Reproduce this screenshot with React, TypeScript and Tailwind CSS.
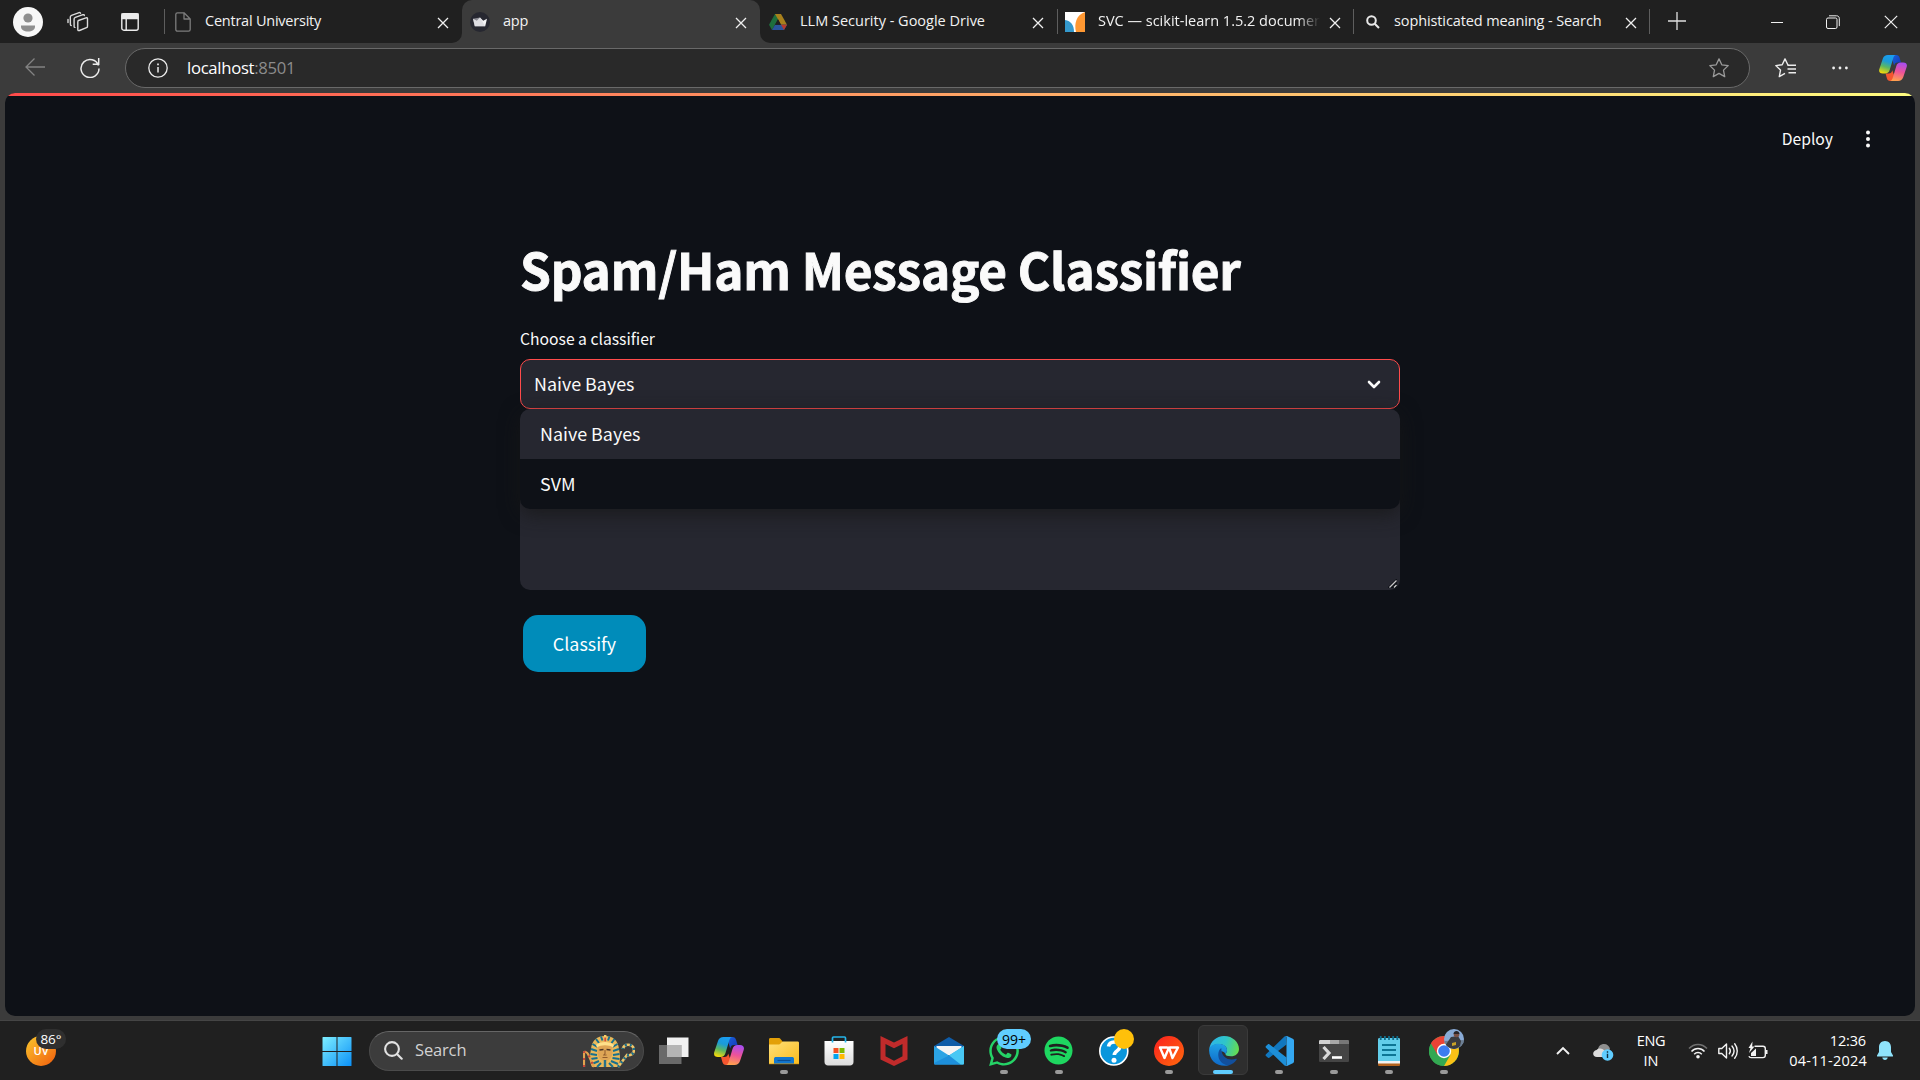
import React from "react";
import { FaWhatsapp, FaSpotify } from "react-icons/fa";

const Close = ({ className = "" }: { className?: string }) => (
  <svg viewBox="0 0 12 12" className={`h-3 w-3 shrink-0 ${className}`} fill="none" stroke="#f0f0f0" strokeWidth="1.3">
    <path d="M1 1l10 10M11 1L1 11" />
  </svg>
);

const Copilot = ({ id, className }: { id: string; className: string }) => (
  <svg viewBox="0 0 30 28" className={className}>
    <defs>
      <linearGradient id={`${id}a`} x1=".6" y1="0" x2=".3" y2="1">
        <stop offset="0" stopColor="#1a9df0" />
        <stop offset=".35" stopColor="#1b9bd8" />
        <stop offset=".65" stopColor="#5cb860" />
        <stop offset="1" stopColor="#f5d90a" />
      </linearGradient>
      <linearGradient id={`${id}b`} x1=".6" y1="0" x2=".4" y2="1">
        <stop offset="0" stopColor="#a84df0" />
        <stop offset=".5" stopColor="#ee5398" />
        <stop offset="1" stopColor="#ffa14e" />
      </linearGradient>
      <linearGradient id={`${id}c`} x1="0" y1="0" x2="1" y2="1">
        <stop offset="0" stopColor="#1b5fd8" />
        <stop offset="1" stopColor="#1238b8" />
      </linearGradient>
    </defs>
    <path d="M14 0h4.500c2 0 3 1 3.600 3l1.500 5h-3.400c-2.600 0-3.200 1-4 3.500L14 4z" fill={`url(#${id}c)`} />
    <path d="M16 28h-4c-2 0-3-1-3.600-3L7 20h3.200c2.600 0 3.400-1 4-3.500L17 24z" fill="#f4562f" />
    <path d="M9.500 0H18c-1.800.4-2.300 2-3 4.200L11.500 16c-.8 2.800-2.300 4-5 4H4C.8 20-.6 18 .3 15L4 4C4.900 1.400 6.700 0 9.500 0z" fill={`url(#${id}a)`} />
    <path d="M20.500 28H12c1.800-.4 2.300-2 3-4.200L18.500 12c.8-2.800 2.300-4 5-4H26c3.200 0 4.600 2 3.700 5L26 24c-.9 2.600-2.700 4-5.500 4z" fill={`url(#${id}b)`} />
  </svg>
);

const Pharaoh = () => (
  <svg viewBox="0 0 52 34" className="h-[34px] w-[52px]">
    <path d="M9 33C6 27 7 21 8 15 9 6 14 2 22 2s13 4 14 13c1 6 2 12-1 18z" fill="#e9b95a" />
    <g stroke="#17708f" strokeWidth="2" fill="none">
      <path d="M13 5l3 4M18 2.500l1.500 4M26.500 2.500L25 6.500M31.500 5l-3 4M9.500 10l5 3M34.500 10l-5 3M8 15l6 2M36 15l-6 2M7.500 20l6.500 1M36.500 20L30 21M7.500 25l7-1M36.500 25l-7-1M9 30l7-3M35 30l-7-3M14 33l4-4M30 33l-4-4" />
    </g>
    <path d="M15 11c2-4 12-4 14 0l.5 8c-.5 5-4 8-7.500 8s-7-3-7.500-8z" fill="#dfa656" />
    <path d="M13 11c4-4 14-4 18 0l-1 2.500c-4-3-12-3-16 0z" fill="#ffe08a" />
    <path d="M16.500 16l4-.5M23.500 15.500l4 .5" stroke="#4c3424" strokeWidth="1.500" />
    <path d="M22 16v4l-1.500 1h3M19.500 23.500h5" stroke="#8f5b2d" fill="none" />
    <path d="M20.800 26h2.400v7h-2.400z" fill="#27718a" />
    <path d="M21 1h2.400v7H21z" fill="#f3d06b" />
    <path d="M21.300 3.500h1.800v4h-1.800z" fill="#d4483b" />
    <path d="M1 33V19c0-2 3-1 4 1l6 13" stroke="#e2a34f" strokeWidth="2.200" fill="none" />
    <path d="M1 33V19c0-2 3-1 4 1l6 13" stroke="#c6473a" strokeWidth="2.200" strokeDasharray="2 5" fill="none" />
    <path d="M35 33l9-12c3 1 7-1 7-5s-4-6-8-5c-2 1-3 2-3 4" stroke="#f0c468" strokeWidth="2.600" fill="none" />
    <path d="M35 33l9-12c3 1 7-1 7-5s-4-6-8-5c-2 1-3 2-3 4" stroke="#1b6f8c" strokeWidth="2.600" strokeDasharray="2 3" fill="none" />
  </svg>
);

const ic = "h-[30px] w-[30px]";

const Folder = () => (
  <svg viewBox="0 0 30 30" className={ic}>
    <defs>
      <linearGradient id="fo" x1="0" y1="0" x2="1" y2="1">
        <stop offset="0" stopColor="#ffe07a" />
        <stop offset="1" stopColor="#fbbc1c" />
      </linearGradient>
    </defs>
    <path d="M0 3.500C0 2.500.6 2 1.500 2h8c1 0 1.500.3 2 1L14 6v6H0z" fill="#e3a008" />
    <path d="M0 11V8.500h9c1.500 0 2-.5 3-1.500s1.500-1.500 3-1.500h13.500c1 0 1.500.5 1.500 1.500V28H0z" fill="url(#fo)" />
    <path d="M5 28v-5.500C5 21.500 6 21 7 21h16c1 0 2 .5 2 1.500V28z" fill="#1277cf" />
    <path d="M8.500 24.500h13" stroke="#0a4f95" strokeWidth="1.200" />
    <path d="M0 27.300h30v1H0z" fill="#d99a10" opacity=".7" />
  </svg>
);

const Store = () => (
  <svg viewBox="0 0 30 30" className={ic}>
    <defs>
      <linearGradient id="st" x1="0" y1="0" x2="0" y2="1">
        <stop offset="0" stopColor="#fff" />
        <stop offset="1" stopColor="#dcdcdc" />
      </linearGradient>
    </defs>
    <path d="M.5 5h29v21c0 2-1.500 3.500-3.500 3.500H4C2 29.500.5 28 .5 26z" fill="url(#st)" />
    <path d="M8.500 6.500V2c0-.6.3-1 1-1h11c.7 0 1 .4 1 1v4.500" stroke="#25b5ea" strokeWidth="1.700" fill="none" />
    <path d="M9.500 12h5v5h-5z" fill="#f25022" />
    <path d="M15.500 12h5v5h-5z" fill="#7fba00" />
    <path d="M9.500 18h5v5h-5z" fill="#00a4ef" />
    <path d="M15.500 18h5v5h-5z" fill="#ffb900" />
  </svg>
);

const Mcafee = () => (
  <svg viewBox="0 0 30 30" className={ic}>
    <path d="M1.500 0L15 6.500 28.500 0v23.500L15 30 1.500 23.500zM6.500 8v12.300L15 24.800l8.500-4.500V8L15 12.200z" fill="#c12b2b" fillRule="evenodd" />
  </svg>
);

const Mail = () => (
  <svg viewBox="0 0 30 30" className={ic}>
    <path d="M0 10L15 1l15 9v5H0z" fill="#0e5ca8" />
    <path d="M2.500 10h25v9h-25z" fill="#f4f4f4" />
    <path d="M0 10l15 9.500L30 10v17c0 1-.5 1.500-1.500 1.500h-27C.5 28.500 0 28 0 27z" fill="#2ba3e4" />
    <path d="M30 10v17c0 1-.5 1.500-1.500 1.500h-2L15 19.500z" fill="#48c8f4" />
    <path d="M26.500 28.500h-25C.5 28.500 0 28 0 27L15 19.500z" fill="#1d8fdb" />
  </svg>
);

const Help = () => (
  <svg viewBox="0 0 30 30" className={ic}>
    <circle cx="14.800" cy="15" r="14" fill="#0a96dc" stroke="#fff" strokeWidth="1.600" />
    <path d="M9.500 10.500c.5-3 2.800-4.500 5.800-4.500 3.200 0 5.500 1.800 5.500 4.700 0 4.300-5.500 4-5.500 8.300" stroke="#fff" strokeWidth="3.600" fill="none" />
    <circle cx="15" cy="24.300" r="2.500" fill="#fff" />
  </svg>
);

const Wps = () => (
  <svg viewBox="0 0 30 30" className={ic}>
    <defs>
      <linearGradient id="wp" x1="0" y1="0" x2="1" y2="1">
        <stop offset="0" stopColor="#fb1f1f" />
        <stop offset="1" stopColor="#ff6a0c" />
      </linearGradient>
    </defs>
    <circle cx="15" cy="15" r="15" fill="url(#wp)" />
    <path d="M13 11.500H6l4.500 10.500L15 11.500l3.500 10.500L24 11.500h-8" fill="none" stroke="#fff" strokeWidth="2.400" strokeLinejoin="round" strokeLinecap="round" />
  </svg>
);

const Edge = () => (
  <svg viewBox="0 0 30 30" className={ic}>
    <defs>
      <linearGradient id="e1" x1="0" y1=".4" x2="1" y2=".6">
        <stop offset="0" stopColor="#2db5e8" />
        <stop offset=".5" stopColor="#2fc5c8" />
        <stop offset="1" stopColor="#66dd4e" />
      </linearGradient>
      <linearGradient id="e2" x1=".5" y1="0" x2=".4" y2="1">
        <stop offset="0" stopColor="#1fa3e6" />
        <stop offset="1" stopColor="#0f68c8" />
      </linearGradient>
    </defs>
    <path d="M.3 13C1.200 5.500 7.500 0 15 0c9 0 15 6.500 15 13 0 4.500-3.500 7.300-8 7.300-3.700 0-5.500-1-5.500-2 0-.9 1.500-1.600 1.500-4.300C18 10.500 14 8 10 8 5.500 8 2 10 .3 13z" fill="url(#e1)" />
    <path d="M.1 14.500C0 10 4.500 7.800 9.500 7.800c5 0 8.500 2.800 8.500 6.200 0 2.700-1.500 3.500-1.500 4.300-1-2.300-2.800-3-4-3-2.500 2-4 10.200 7 14.200C9 31.500.3 25 .1 14.500z" fill="url(#e2)" />
    <path d="M12.300 12C7.500 15 7.500 28 19.500 29.400c3.500-.8 6.500-3 8.200-5.900.4-.7-.1-1-.8-.7C21 25 12 22.500 12.300 12z" fill="#124f9c" />
  </svg>
);

const VsCode = () => (
  <svg viewBox="0 0 30 30" className={ic}>
    <path d="M22 0l-1.500.6L2 18.300c-.6.5-.6 1.200 0 1.700l1.700 1.600c.5.400 1.100.5 1.600.1L22.500 8.500z" fill="#1177bf" />
    <path d="M22 30l-1.500-.6L2 11.700c-.6-.5-.6-1.200 0-1.700l1.700-1.600c.5-.4 1.100-.5 1.600-.1l17.200 13.200z" fill="#1d8fd8" />
    <path d="M22 .2c.5-.3 1-.2 1.500 0l5.300 2.600c.8.400 1.200 1 1.200 1.800v20.800c0 .8-.4 1.400-1.200 1.800l-5.300 2.600c-.5.300-1 .3-1.500 0 .4-.3.500-.6.500-1V1.200c0-.4-.1-.7-.5-1z" fill="#34a8f2" />
  </svg>
);

const Terminal = () => (
  <svg viewBox="0 0 30 30" className={ic}>
    <path d="M0 5.500C0 4.500.5 4 1.500 4h27c1 0 1.500.5 1.500 1.500v19c0 1-.5 1.500-1.500 1.500h-27C.5 26 0 25.500 0 24.500z" fill="#454545" />
    <path d="M0 8V5.500C0 4.500.5 4 1.500 4H11v4z" fill="#d2d2d2" />
    <path d="M11 4h9v4h-9z" fill="#a8a8a8" />
    <path d="M20 4h8.500c1 0 1.500.5 1.500 1.500V8H20z" fill="#777" />
    <path d="M4.500 11l5.500 6-5.500 6" stroke="#d8d8d8" strokeWidth="3.200" fill="none" />
    <path d="M13 21.500h10" stroke="#fff" strokeWidth="2.600" />
  </svg>
);

const Notepad = () => (
  <svg viewBox="0 0 30 30" className={ic}>
    <path d="M4 26h22v2.500c0 1-.5 1.500-1.500 1.500h-19C4.500 30 4 29.500 4 28.500z" fill="#b3621c" />
    <path d="M4 24h22v3.500H4z" fill="#f2f2f2" />
    <path d="M4 3.500C4 2.500 4.500 2 5.500 2h19c1 0 1.500.5 1.500 1.500V25H4z" fill="#62cdea" />
    <path d="M6.700 0v4M10.900 0v4M15 0v4M19.200 0v4M23.300 0v4" stroke="#0f6e8c" strokeWidth="1.800" />
    <path d="M8 9h14M8 14h14M8 19h14" stroke="#0d7595" strokeWidth="1.800" />
  </svg>
);

const Chrome = () => (
  <svg viewBox="0 0 30 30" className={ic}>
    <circle cx="15" cy="15" r="15" fill="#33a852" />
    <path d="M15 15L2 7.500C4.600 3 9.500 0 15 0s10.400 3 13 7.500z" fill="#ea4335" />
    <path d="M15 15V7.500h13c3.500 6 2 13.500-2.400 18-3 3-6.600 4.500-10.600 4.500z" fill="#fbc116" />
    <path d="M15 30l6.500-11.200L15 15l-6.500 3.800-6.500-11.300A15 15 0 0 0 15 30z" fill="#33a852" />
    <path d="M2 7.500A15 15 0 0 1 5 3.800L15 7.500l-6.500 11.300z" fill="#ea4335" />
    <circle cx="15" cy="15" r="7.200" fill="#fff" />
    <circle cx="15" cy="15" r="5.800" fill="#3b7cf0" />
  </svg>
);

const TaskView = () => (
  <svg viewBox="0 0 30 30" className={ic}>
    <path d="M8 1.500h21.500V21H8z" fill="#f1f1f1" />
    <path d="M0 9h22.500v19H0z" fill="#8a8a8a" opacity=".7" />
    <path d="M8 9h14.500v12H8z" fill="#b5b5b5" />
  </svg>
);

const Windows = () => (
  <svg viewBox="0 0 30 30" className={ic}>
    <defs>
      <linearGradient id="wi" gradientUnits="userSpaceOnUse" x1="0" y1="0" x2="30" y2="30">
        <stop offset="0" stopColor="#80f0ff" />
        <stop offset=".5" stopColor="#45c0fb" />
        <stop offset="1" stopColor="#0a90f8" />
      </linearGradient>
    </defs>
    <path d="M.5 1.500q0-.5.500-.5h13.500v14H.5zM15.500 1H29q.5 0 .5.500V15h-14zM.5 16h14v14H1q-.5 0-.5-.5zM15.500 16h14v13.500q0 .5-.5.500H15.500z" fill="url(#wi)" />
  </svg>
);

type AppEntry = { name: string; icon: React.ReactNode; mark?: "on" | "active"; badge?: React.ReactNode };

const apps: AppEntry[] = [
  { name: "taskview", icon: <TaskView /> },
  { name: "copilot", icon: <Copilot id="tb" className="h-7 w-[30px]" /> },
  { name: "files", icon: <Folder />, mark: "on" },
  { name: "store", icon: <Store /> },
  { name: "mcafee", icon: <Mcafee /> },
  { name: "mail", icon: <Mail /> },
  {
    name: "whatsapp",
    icon: <FaWhatsapp className="h-[34px] w-[34px] text-[#25d366]" />,
    mark: "on",
    badge: (
      <span className="absolute left-[21px] top-[8px] flex h-5 w-[34px] items-center justify-center rounded-full bg-[#60cdff] text-[14px] text-black">
        99+
      </span>
    ),
  },
  { name: "spotify", icon: <FaSpotify className="h-[29px] w-[29px] text-[#1ed760]" />, mark: "on" },
  { name: "help", icon: <Help />, badge: <span className="absolute left-[28px] top-[8px] h-5 w-5 rounded-full bg-[#ffc00a]" /> },
  { name: "wps", icon: <Wps />, mark: "on" },
  { name: "edge", icon: <Edge />, mark: "active" },
  { name: "vscode", icon: <VsCode />, mark: "on" },
  { name: "terminal", icon: <Terminal />, mark: "on" },
  { name: "notepad", icon: <Notepad />, mark: "on" },
  {
    name: "chrome",
    icon: <Chrome />,
    mark: "on",
    badge: (
      <svg viewBox="0 0 20 20" className="absolute left-[28px] top-[8px] h-5 w-5">
        <defs>
          <clipPath id="av"><circle cx="10" cy="10" r="10" /></clipPath>
        </defs>
        <g clipPath="url(#av)">
          <path d="M0 0h20v20H0z" fill="#89abd6" />
          <path d="M0 12l20-1v9H0z" fill="#6d7f93" />
          <path d="M1 17L7 8l7-1 3 5-1 5-4 3H3z" fill="#3b3c40" />
          <circle cx="12.500" cy="5.500" r="2.800" fill="#7a5145" />
          <path d="M9.500 5c0-4 6-4 6 0z" fill="#2a2527" />
          <path d="M8 14l4-1v3l-4 1z" fill="#c9a227" />
        </g>
      </svg>
    ),
  },
];

const Sep = () => <span className="h-[25px] w-px shrink-0 bg-[#5e5e5e]" />;

function Tabs() {
  return (
    <div className="flex h-[43px] whitespace-pre bg-[#3b3b3b] text-[14.500px] text-[#f2f2f2]">
      <div className="flex w-[462px] items-center rounded-br-[10px] bg-[#202020] pl-[13px]">
        <svg viewBox="0 0 30 30" className="h-[30px] w-[30px]">
          <circle cx="15" cy="15" r="15" fill="#f7f7f7" />
          <circle cx="15" cy="11" r="4.600" fill="#8e8e8e" />
          <path d="M8 18.500h14v1c0 3.500-3 5-7 5s-7-1.500-7-5z" fill="#8e8e8e" />
        </svg>
        <svg viewBox="0 0 22 22" className="ml-6 h-[22px] w-[22px]" fill="none" stroke="#dcdcdc" strokeWidth="1.400" strokeLinejoin="round" strokeLinecap="round">
          <path d="M11.500 9.500l7.500-2.700c1-.3 1.500 0 1.500 1v7.400c0 .8-.4 1.300-1 1.500l-7 2.800c-1 .4-1.700 0-1.700-1v-7.200c0-.9 0-1.500.7-1.800z" />
          <path d="M17.300 4.500c0-.8-.6-1-1.400-.8L8.300 6.400c-.8.300-1.200.8-1.200 1.700v7.300c0 .8.300 1 .8 1" />
          <path d="M13.500 2.200c-.2-.7-.7-.8-1.400-.6L4.500 4.300c-.8.300-1.200.8-1.200 1.700l.1 7.500c0 .8.300 1 .8 1M1 8.500v3" />
        </svg>
        <svg viewBox="0 0 18 18" className="ml-[32px] h-[18px] w-[18px]" fill="none" stroke="#ececec" strokeWidth="1.400">
          <rect x=".8" y=".8" width="16.400" height="16.400" rx="2" />
          <path d="M1 1h16v4.500H1z" fill="#ececec" />
          <path d="M5.200 5v12" />
        </svg>
        <span className="w-[25px]" />
        <Sep />
        <svg viewBox="0 0 16 20" className="ml-[10px] h-5 w-4" fill="none" stroke="#7c7c7c" strokeWidth="1.300" strokeLinejoin="round">
          <path d="M.8 2.500C.8 1.500 1.500.8 2.500.8H9L15.200 7v10.500c0 1-.7 1.700-1.700 1.700h-11c-1 0-1.700-.7-1.700-1.700zM9 .8V7h6.200" />
        </svg>
        <span className="ml-[14px] mr-auto pb-[2px] tracking-[-0.23px]">Central University</span>
        <Close className="mr-[13px] translate-y-px" />
      </div>
      <div className="w-[298px] bg-[linear-gradient(#202020_50%,#3b3b3b_50%)]">
        <div className="flex h-full items-center rounded-t-[10px] bg-[#3b3b3b] pl-2">
          <svg viewBox="0 0 20 20" className="h-5 w-5">
            <circle cx="10" cy="10" r="10" fill="#262730" />
            <path d="M3 6.800l3.800 2L10 5.500l3.200 3.300 3.800-2-1.800 7.500H4.800z" fill="#f3f3f5" />
            <path d="M10 5.500l5.200 8.800H4.800L3 6.800z" fill="#cfcfd6" opacity=".6" />
          </svg>
          <span className="ml-[13px] mr-auto pb-[2px] tracking-[-0.2px]">app</span>
          <Close className="mr-[13px] translate-y-px" />
        </div>
      </div>
      <div className="flex flex-1 items-center rounded-bl-[10px] bg-[#202020] pl-[9px]">
        <svg viewBox="0 0 18 16" className="h-4 w-[18px]">
          <path d="M6 0h6L3 16 0 10.700z" fill="#1e6e3d" />
          <path d="M6 0h6l6 10.700h-6z" fill="#a8801c" />
          <path d="M3 16l3-5.300h12L15 16z" fill="#2a559c" />
          <path d="M12 10.700h6L15 16z" fill="#b8392d" />
          <path d="M9 5.300l3 5.400H6z" fill="#202020" />
        </svg>
        <span className="ml-[13px] w-[232px] pb-[2px]">LLM Security - Google Drive</span>
        <Close className="mr-[13px] translate-y-px" />
        <Sep />
        <svg viewBox="0 0 20 20" className="ml-[7px] h-5 w-5 shrink-0">
          <path d="M0 0h20v20H0z" fill="#fff" />
          <path d="M0 8c6 1 9 5 9 12H0z" fill="#3499cd" />
          <path d="M20 0v20h-9C9 12 11 3 20 0z" fill="#ff9832" />
        </svg>
        <span className="ml-[13px] w-[222px] overflow-hidden pb-[2px] [mask-image:linear-gradient(to_right,#000_90%,transparent)]">SVC — scikit-learn 1.5.2 documen</span>
        <Close className="ml-[9px] mr-[12px] translate-y-px" />
        <Sep />
        <svg viewBox="0 0 14 14" className="ml-[12px] h-[14px] w-[14px] shrink-0" fill="none" stroke="#e8e8e8" strokeWidth="2">
          <circle cx="5.500" cy="5.500" r="4.300" />
          <path d="M8.700 8.700L13 13" />
        </svg>
        <span className="ml-[14px] w-[231px] pb-[2px] tracking-[-0.11px]">sophisticated meaning - Search</span>
        <Close className="mr-[12px] translate-y-px" />
        <Sep />
        <svg viewBox="0 0 18 18" className="ml-[18px] h-[18px] w-[18px] shrink-0 -translate-y-px" stroke="#e0e0e0" strokeWidth="1.300">
          <path d="M9 0v18M0 9h18" />
        </svg>
        <svg viewBox="0 0 12 12" className="ml-auto h-3 w-3" stroke="#f0f0f0"><path d="M0 6.500h12" /></svg>
        <svg viewBox="0 0 14 14" className="ml-[43px] h-[14px] w-[14px]" fill="none" stroke="#f0f0f0">
          <rect x=".5" y="3" width="10.500" height="10.500" rx="1.500" />
          <path d="M3 .8h7.500c1.800 0 2.800 1 2.800 2.800v7.500" />
        </svg>
        <svg viewBox="0 0 14 14" className="ml-[44px] mr-[22px] h-[14px] w-[14px]" stroke="#f0f0f0" strokeWidth="1.200"><path d="M.8.800l12.400 12.400M13.200.8L.8 13.200" /></svg>
      </div>
    </div>
  );
}

function Toolbar() {
  return (
    <div className="flex h-[50px] items-center bg-[#3b3b3b]">
      <svg viewBox="0 0 20 18" className="ml-[25px] h-[18px] w-5 -translate-y-px" fill="none" stroke="#838383" strokeWidth="1.300">
        <path d="M20 9H1M9.500.5L1 9l8.500 8.500" />
      </svg>
      <svg viewBox="0 0 20 21" className="ml-[35px] h-[21px] w-5 -translate-y-px" fill="none" stroke="#ececec" strokeWidth="1.500">
        <path d="M18.500 8.500A9 9 0 1 0 19 11.500M18.700 1v6.300h-6" />
      </svg>
      <div className="ml-[25px] flex h-10 w-[1625px] items-center rounded-full border border-[#696969] bg-[#292929] pl-[22px]">
        <svg viewBox="0 0 20 20" className="h-5 w-5" fill="none" stroke="#ececec" strokeWidth="1.300">
          <circle cx="10" cy="10" r="9.200" />
          <path d="M10 9v5.500" strokeWidth="1.500" />
          <path d="M10 5.500v1.800" strokeWidth="1.700" />
        </svg>
        <span className="ml-[19px] pb-px text-[16.700px] tracking-[-0.3px] text-white">localhost<span className="text-[#8c8c8c]">:8501</span></span>
        <svg viewBox="0 0 20 20" className="ml-auto mr-[20px] h-5 w-5" fill="none" stroke="#9a9a9a" strokeWidth="1.300" strokeLinejoin="round">
          <path d="M10 .9l2.800 5.900 6.400.8-4.700 4.500 1.200 6.500L10 15.400l-5.700 3.200 1.200-6.500L.8 7.600l6.400-.8z" />
        </svg>
      </div>
      <svg viewBox="0 0 21 20" className="ml-[25px] h-5 w-[21px]" fill="none" stroke="#ececec" strokeWidth="1.400" strokeLinejoin="round">
        <path d="M13.500 7L12.800 6.800 10 .9 7.200 6.800l-6.400.8 4.700 4.500-1.200 6.500L10 15.400" />
        <path d="M12.500 7.200H21M12.500 11H21M13.500 14.800H21" />
      </svg>
      <svg viewBox="0 0 16 4" className="ml-[36px] h-1 w-4" fill="#f0f0f0">
        <circle cx="1.600" cy="2" r="1.400" /><circle cx="8" cy="2" r="1.400" /><circle cx="14.400" cy="2" r="1.400" />
      </svg>
      <Copilot id="tbr" className="ml-[31px] h-[26px] w-7" />
    </div>
  );
}

function Page() {
  return (
    <div className="mx-[5px] h-[923px] overflow-hidden rounded-[10px] bg-[#0e1117] font-['Noto_Sans_CJK_SC','Noto_Sans',sans-serif] text-[#fafafa]">
      <div className="h-[3px] bg-[linear-gradient(to_right,#ff4b4b,#fffd80)]" />
      <div className="flex h-[84px] items-center justify-end pr-[45px] pt-px">
        <span className="text-[15.700px]">Deploy</span>
        <svg viewBox="0 0 4 18" className="ml-[33px] h-[18px] w-1" fill="#fafafa">
          <circle cx="2" cy="2.500" r="2" /><circle cx="2" cy="9" r="2" /><circle cx="2" cy="15.500" r="2" />
        </svg>
      </div>
      <div className="ml-[515px] w-[880px]">
        <h1 className="mt-[54px] h-[70px] whitespace-pre text-[49.500px] font-bold leading-[70px] tracking-[-0.23px] [-webkit-text-stroke:0.9px_#fafafa]">Spam/Ham Message Classifier</h1>
        <div className="mt-[23px] h-[24px] text-[15.700px] leading-[24px]">Choose a classifier</div>
        <div className="relative mt-[8px] flex h-[50px] items-center rounded-[10px] border border-[#ff4b4b] bg-[#262730] px-[13px] text-[17.900px]">
          <span className="pb-[2px]">Naive Bayes</span>
          <svg viewBox="0 0 14 9" className="ml-auto mr-[5px] h-[9px] w-[14px]" fill="none" stroke="#fafafa" strokeWidth="2.600" strokeLinecap="round" strokeLinejoin="round">
            <path d="M2 2l5 5 5-5" />
          </svg>
          <div className="absolute -left-px top-[49px] z-10 w-[880px] overflow-hidden rounded-[10px] bg-[#0e1117] shadow-[0_5px_20px_rgba(22,22,22,0.8)]">
            <div className="flex h-[50px] items-center bg-[#262730] pb-[2px] pl-5">Naive Bayes</div>
            <div className="flex h-[50px] items-center pb-[2px] pl-5">SVM</div>
          </div>
        </div>
        <div className="mt-[62px] flex h-[119px] items-end justify-end rounded-[10px] bg-[#262730] pb-[2px] pr-[3px]">
          <svg viewBox="0 0 9 9" className="h-[9px] w-[9px]">
            <path d="M0 9V8L8 0h1v9z" fill="#0e1117" />
            <path d="M1.500 8.500l7-7M6 8.500L8.500 6" stroke="#c8c8c8" strokeWidth="1.300" />
          </svg>
        </div>
        <button className="ml-[3px] mt-[25px] flex h-[57px] w-[123px] items-center justify-center rounded-[15px] bg-[#008cba] text-[17.900px] text-white">Classify</button>
      </div>
    </div>
  );
}

function Taskbar() {
  return (
    <div className="flex h-[60px] items-center border-t border-[#454545] bg-[#202020] text-white">
      <div className="relative ml-[26px] mt-px h-[30px] w-[40px]">
        <div className="flex h-[30px] w-[30px] items-end justify-center rounded-full bg-linear-to-br from-[#f7c52c] to-[#ef5a0c] pb-[8px] text-[11px] font-semibold leading-[14px]">UV</div>
        <div className="absolute left-[10px] top-[-7px] flex h-[20px] w-[30px] items-center justify-center rounded-full bg-[#2f2f2f] text-[13.500px]">86°</div>
      </div>
      <div className="ml-[256px]"><Windows /></div>
      <div className="ml-[17px] flex h-10 w-[275px] items-center rounded-full border border-[#4b4b4b] border-t-[#666] bg-[#3c3c3c] pl-[14px]">
        <svg viewBox="0 0 19 19" className="h-[19px] w-[19px]" fill="none" stroke="#e2e2e2" strokeWidth="2.100" strokeLinecap="round">
          <circle cx="8" cy="8" r="6.900" /><path d="M13.200 13.200L17.700 17.700" />
        </svg>
        <span className="ml-[12px] mr-auto text-[16.500px] tracking-[-0.15px] text-[#d2d2d2]">Search</span>
        <span className="mr-[8px]"><Pharaoh /></span>
      </div>
      <div className="ml-[2px] flex">
        {apps.map((a) => (
          <div key={a.name} className="relative flex h-[59px] w-[55px] items-center justify-center">
            {a.mark === "active" && <span className="absolute left-[2px] top-[4px] h-[50px] w-[50px] rounded-[6px] border border-[#3a3a3a] bg-[#2e2e2e]" />}
            <span className="relative flex h-[34px] w-[34px] items-center justify-center">{a.icon}</span>
            {a.badge}
            {a.mark === "on" && <span className="absolute bottom-[6px] left-[24px] h-1 w-2 rounded-full bg-[#9a9a9a]" />}
            {a.mark === "active" && <span className="absolute bottom-[6px] left-[17px] h-1 w-5 rounded-full bg-[#60cdff]" />}
          </div>
        ))}
      </div>
      <svg viewBox="0 0 14 9" className="ml-[85px] h-[9px] w-[14px]" fill="none" stroke="#f2f2f2" strokeWidth="1.900"><path d="M1 8l6-6 6 6" /></svg>
      <svg viewBox="0 0 21 18" className="ml-[23px] mt-[3px] h-[18px] w-[21px]">
        <path d="M5 7C5 3 8 1 11 1c3 0 5.500 2 6 5l-5 7H7z" fill="#8f8f8f" />
        <path d="M4 14c-5 0-5-6-.5-7 3-3 7-1 8 1l4 2v4z" fill="#dcdcdc" />
        <circle cx="14.500" cy="12" r="5.800" fill="#60cdff" />
        <path d="M14.500 10.800v4.200M14.500 8.300v1.500" stroke="#103040" strokeWidth="1.400" />
      </svg>
      <div className="ml-[21px] flex w-[32px] flex-col items-center text-[14.500px] leading-[20px]"><span className="tracking-[-0.3px]">ENG</span><span>IN</span></div>
      <svg viewBox="0 0 20 16" className="ml-[21px] h-4 w-5" fill="none" stroke="#f2f2f2" strokeWidth="1.500">
        <path d="M1 5.500c5-5.500 13-5.500 18 0" stroke="#707070" />
        <path d="M3.500 8.500c3.600-4 9.400-4 13 0M6.200 11.300c2.200-2.300 5.400-2.300 7.600 0" />
        <circle cx="10" cy="13.700" r="1.800" fill="#f2f2f2" stroke="none" />
      </svg>
      <svg viewBox="0 0 20 18" className="ml-[10px] h-[18px] w-5" fill="none" stroke="#f2f2f2" strokeWidth="1.400" strokeLinejoin="round" strokeLinecap="round">
        <path d="M.8 6.500h3L8.500 2v14l-4.700-4.500h-3zM11.300 6.200c1.300 1.700 1.300 3.900 0 5.600M14 4c2.500 3 2.500 7 0 10M16.700 1.800c3.400 4.200 3.400 10.200 0 14.400" />
      </svg>
      <svg viewBox="0 0 20 16" className="ml-[10px] h-4 w-5 overflow-visible" fill="none" stroke="#f2f2f2" strokeWidth="1.400" strokeLinejoin="round">
        <path d="M6.500 3.200H15c1.500 0 2.300.8 2.300 2.300v6.800c0 1.500-.8 2.300-2.300 2.300H3c-1 0-1.800-.5-2-1.500" />
        <path d="M18 7v4h1.500V7z" fill="#f2f2f2" stroke="none" />
        <path d="M4.500-1.500L.5 5h2L1 10l5.500-6.500H4.200z" fill="#f2f2f2" stroke="none" />
        <path d="M3 13V10l5-4.500V13z" fill="#f2f2f2" stroke="none" />
      </svg>
      <div className="ml-[18px] flex w-[80px] flex-col items-end text-[14.500px] leading-[20px]"><span className="tracking-[-0.15px]">12:36</span><span className="-mr-px tracking-[0.22px]">04-11-2024</span></div>
      <svg viewBox="0 0 16 19" className="ml-[11px] h-[19px] w-4" fill="#8fe3fb">
        <path d="M8 0c3.800 0 6 2.800 6 6.200V11l2 3.500c.2.600 0 1-.6 1H.6c-.6 0-.8-.4-.6-1L2 11V6.200C2 2.800 4.200 0 8 0zM5.300 16.500h5.400c-.2 1.500-1.200 2.500-2.700 2.500s-2.500-1-2.700-2.500z" />
      </svg>
    </div>
  );
}

export default function App() {
  return (
    <div className="flex h-[1080px] w-[1920px] flex-col overflow-hidden bg-[#3b3b3b] font-['Open_Sans','Noto_Sans',sans-serif]">
      <Tabs />
      <Toolbar />
      <Page />
      <div className="h-1 shrink-0" />
      <Taskbar />
    </div>
  );
}
